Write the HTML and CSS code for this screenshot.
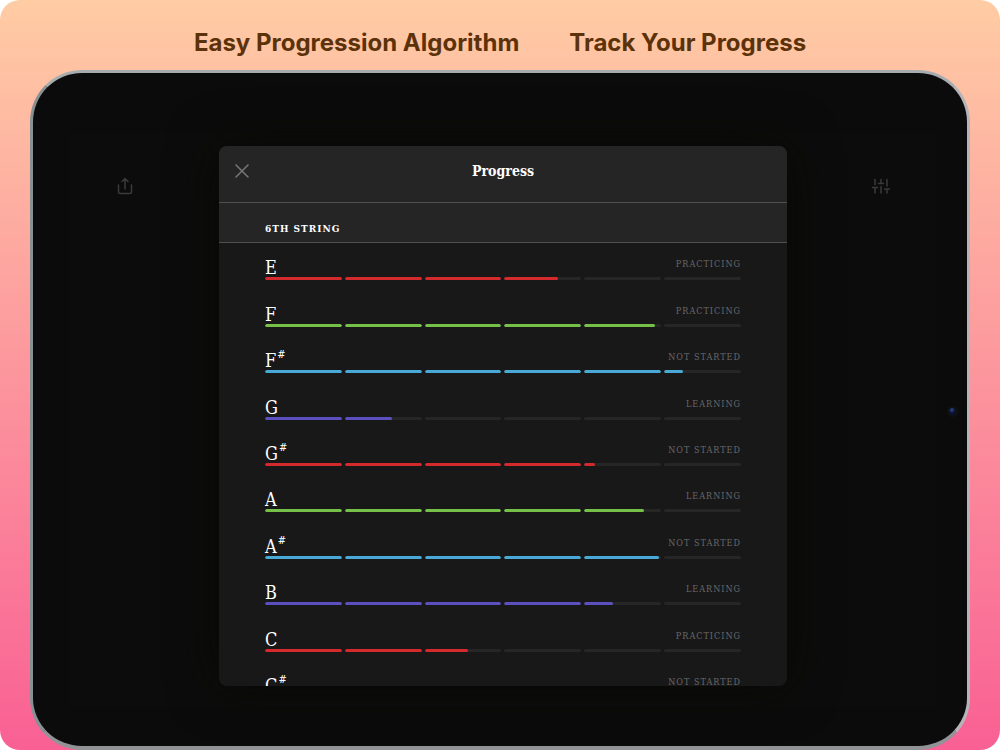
FILE: index.html
```
<!DOCTYPE html>
<html lang="en">
<head>
    <meta charset="UTF-8">
    <meta name="viewport" content="width=device-width, initial-scale=1.0">
    <title>Progress</title>
    <link rel="stylesheet" href="styles.css">
</head>
<body>
    <div class="stage">
        <header class="taglines">
            <h2>Easy Progression Algorithm</h2>
            <h2>Track Your Progress</h2>
        </header>

        <div class="tablet">
            <div class="screen">
                <div class="side">
                    <button class="icon-button" aria-label="Share">
                        <svg width="20" height="20" viewBox="0 0 20 20">
                            <path d="M10 13V3M7 5.500L10 2.500L13 5.500M3.500 9V16Q3.500 17.500 5 17.500H15Q16.500 17.500 16.500 16V9"/>
                        </svg>
                    </button>
                </div>

                <main class="modal">
                    <div class="modal-header">
                        <button class="icon-button close" aria-label="Close">
                            <svg width="14" height="14" viewBox="0 0 14 14"><path d="M1 1L13 13M13 1L1 13"/></svg>
                        </button>
                        <h1>Progress</h1>
                    </div>
                    <h3 class="section-title">6TH STRING</h3>
                    <div class="scroll">
                        <ul class="notes" id="notes"></ul>
                    </div>
                </main>

                <div class="side side-right">
                    <button class="icon-button" aria-label="Settings">
                        <svg width="20" height="20" viewBox="0 0 20 20">
                            <path d="M4 3.500V8.500M4 12.500V17M1.500 11.500H6.500M10 3.500V7M10 10.500V17M7.500 7.500H12.500M16 3.500V10M16 13.500V17M13.500 13H18.500"/>
                        </svg>
                    </button>
                </div>
            </div>
            <span class="camera"></span>
        </div>
    </div>

    <script>
        // value = number of segments filled, out of 6
        const notes = [
            { name: "E", color: "red", value: 3.7, status: "PRACTICING" },
            { name: "F", color: "green", value: 4.92, status: "PRACTICING" },
            { name: "F", sharp: true, color: "blue", value: 5.24, status: "NOT STARTED" },
            { name: "G", color: "purple", value: 1.61, status: "LEARNING" },
            { name: "G", sharp: true, color: "red", value: 4.14, status: "NOT STARTED" },
            { name: "A", color: "green", value: 4.78, status: "LEARNING" },
            { name: "A", sharp: true, color: "blue", value: 4.97, status: "NOT STARTED" },
            { name: "B", color: "purple", value: 4.37, status: "LEARNING" },
            { name: "C", color: "red", value: 2.57, status: "PRACTICING" },
            { name: "C", sharp: true, color: "green", value: 3.2, status: "NOT STARTED" }
        ];

        let html = "";
        notes.forEach((note) => {
            let bars = "";
            for (let i = 0; i < 6; i++) {
                const fill = Math.max(0, Math.min(1, note.value - i)) * 100;
                bars += `<span class="segment"><span class="fill" style="width: ${fill.toFixed(0)}%"></span></span>`;
            }
            html += `<li class="note ${note.color}">
                <div class="note-text">
                    <span class="name">${note.name}${note.sharp ? '<span class="sharp">#</span>' : ''}</span>
                    <span class="status">${note.status}</span>
                </div>
                <div class="bar">${bars}</div>
            </li>`;
        });
        document.getElementById("notes").innerHTML = html;
    </script>
</body>
</html>
```
FILE: styles.css
```
* {
    box-sizing: border-box;
}
body {
    margin: 0;
    background: #fff;
}
h1, h2, h3, ul {
    margin: 0;
    padding: 0;
}
.stage {
    display: flex;
    flex-direction: column;
    height: 100vh;
    min-height: 600px;
    padding: 0 30px;
    border-radius: 20px;
    background: linear-gradient(#ffcca4, #fda8a0 33%, #f96094);
}
.taglines {
    display: flex;
    justify-content: center;
    gap: 50px;
    height: 70px;
    padding-top: 28px;
}
.taglines h2 {
    font-family: Inter, sans-serif;
    font-size: 24px;
    line-height: 30px;
    font-weight: 700;
    color: #5c320a;
}
.tablet {
    position: relative;
    flex: 1;
    min-height: 0;
    padding: 60px 31px 39px 37px;
    border: 3px solid;
    border-bottom-width: 4px;
    border-color: #a7adaf #b5b5b9 #929396 #879092;
    border-radius: 52px;
    background: #0b0b0b;
}
.screen {
    display: flex;
    height: 100%;
    background: #0c0c0c;
}
.side {
    flex: 1;
    padding: 43px 45px;
}
.side-right {
    text-align: right;
}
.icon-button {
    padding: 0;
    border: none;
    background: none;
    cursor: pointer;
}
.icon-button svg {
    display: block;
    fill: none;
    stroke: #3a3a3a;
    stroke-width: 1.5;
    stroke-linecap: round;
    stroke-linejoin: round;
}
.side .icon-button {
    display: inline-block;
}
.modal {
    display: flex;
    flex-direction: column;
    width: 568px;
    margin: 13px 0 21px;
    border-radius: 8px;
    background: #181818;
    box-shadow: 0 0 50px #080a05;
    font-family: "DejaVu Serif Condensed", "DejaVu Serif", serif;
    color: #fff;
    overflow: hidden;
}
.modal-header {
    display: grid;
    grid-template-columns: 14px 1fr 14px;
    align-items: center;
    height: 57px;
    padding: 0 16px 6px;
    border-bottom: 1px solid #505050;
    background: #252525;
}
.modal-header h1 {
    font-size: 14px;
    line-height: 20px;
    text-align: center;
}
.close svg {
    stroke: #77777a;
}
.section-title {
    height: 40px;
    padding: 18px 46px 0;
    border-bottom: 1px solid #505050;
    background: #252525;
    font-size: 10px;
    line-height: 16px;
    letter-spacing: 1px;
}
.scroll {
    flex: 1;
    min-height: 0;
    padding: 0 46px;
    overflow: hidden;
}
.notes {
    display: flex;
    flex-direction: column;
    height: 464px;
    list-style: none;
}
.note {
    display: flex;
    flex: 1;
    flex-direction: column;
    justify-content: flex-end;
    padding-bottom: 9px;
}
.note-text {
    display: flex;
    justify-content: space-between;
    height: 22px;
}
.name {
    display: flex;
    gap: 1px;
    font-size: 18px;
    line-height: 26px;
}
.sharp {
    font-size: 11px;
    line-height: 14px;
}
.status {
    font-size: 9px;
    line-height: 18px;
    letter-spacing: 1px;
    color: #68686a;
}
.bar {
    display: flex;
    gap: 3px;
}
.segment {
    flex: 1;
    height: 3px;
    border-radius: 2px;
    background: #262626;
    overflow: hidden;
}
.fill {
    display: block;
    height: 3px;
    border-radius: 2px;
}
.red .fill {
    background: #d42a2e;
}
.green .fill {
    background: #76c04a;
}
.blue .fill {
    background: #48a8d6;
}
.purple .fill {
    background: #5c50be;
}
.camera {
    position: absolute;
    top: calc(50% - 4px);
    right: 9px;
    width: 11px;
    height: 11px;
    border: 2px solid #111113;
    border-radius: 50%;
    background: radial-gradient(circle at 40% 25%, #2f4c94, #0a0f2c 50%);
}
```
